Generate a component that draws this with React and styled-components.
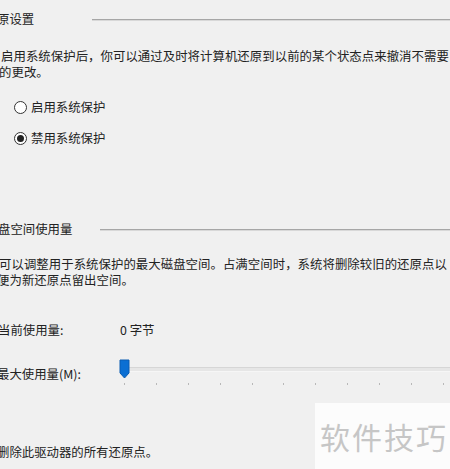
import React from "react";
import styled, { createGlobalStyle } from "styled-components";

const Global = createGlobalStyle`
  html, body { margin: 0; padding: 0; background: #f0f0f0; }
  body { font-family: "Noto Sans CJK SC", "Noto Sans", sans-serif; }
`;

const Page = styled.div`
  position: relative;
  width: 450px;
  height: 469px;
  overflow: hidden;
  background: #f0f0f0;
  color: #222;
  font-size: 12.4px;
  line-height: 16px;
  display: flex;
  flex-direction: column;
`;

const GroupHeader = styled.div`
  display: flex;
  align-items: center;
  gap: ${(p) => p.$gap}px;
  margin-top: ${(p) => p.$top}px;
  margin-left: ${(p) => p.$shift}px;
  height: 16px;
  white-space: nowrap;
`;

const Rule = styled.div`
  flex: 1;
  height: 1px;
  background: #a6a6a6;
  box-shadow: 0 1px 0 #d8d8d8;
`;

const Desc = styled.div`
  margin-top: ${(p) => p.$top}px;
  display: flex;
  flex-direction: column;
  white-space: nowrap;
`;

const Line = styled.span`
  margin-left: ${(p) => p.$shift || 0}px;
  letter-spacing: 0.05px;
`;

const RadioList = styled.div`
  display: flex;
  flex-direction: column;
  gap: 11px;
  margin-top: 17px;
  padding-left: 14px;
`;

const RadioRow = styled.label`
  display: flex;
  align-items: center;
  gap: 4px;
  height: 20px;
`;

const RadioCircle = styled.span`
  width: 11px;
  height: 11px;
  border-radius: 50%;
  border: 1px solid #333;
  background: #fff;
  display: flex;
  align-items: center;
  justify-content: center;
  &::after {
    content: "";
    width: 7px;
    height: 7px;
    border-radius: 50%;
    background: ${(p) => (p.$checked ? "#222" : "transparent")};
  }
`;

const FieldRow = styled.div`
  display: grid;
  grid-template-columns: 119px 1fr;
  align-items: center;
  margin-top: ${(p) => p.$top}px;
  height: ${(p) => p.$h}px;
  white-space: nowrap;
`;

const FieldLabel = styled.span`
  margin-left: ${(p) => p.$shift}px;
`;

const FieldValue = styled.span`
  margin-left: 1px;
`;

const Slider = styled.div`
  position: relative;
  height: 30px;
`;

const Track = styled.div`
  position: absolute;
  left: 8px;
  right: 0;
  top: 8px;
  height: 3px;
  background: #e6e6e6;
  border-top: 1px solid #d6d6d6;
  border-bottom: 1px solid #f6f6f6;
`;

const Thumb = styled.svg`
  position: absolute;
  left: 0;
  top: 0;
`;

const Ticks = styled.div`
  position: absolute;
  left: 5px;
  right: 0;
  top: 24px;
  display: flex;
  gap: 30.9px;
`;

const Tick = styled.span`
  width: 1px;
  height: 2px;
  background: #b8b8b8;
  flex: none;
`;

const Footer = styled.div`
  margin-top: ${(p) => p.$top}px;
  margin-left: -3px;
  white-space: nowrap;
`;

const Watermark = styled.div`
  position: absolute;
  left: 315px;
  top: 403px;
  width: 135px;
  height: 66px;
  background: #fcfcfc;
  display: flex;
  align-items: center;
  padding-left: 5px;
  box-sizing: border-box;
  color: #c6c6c6;
  font-size: 30px;
  letter-spacing: 2px;
  white-space: nowrap;
`;

export default function App() {
  return (
    <Page>
      <Global />
      <GroupHeader $top={11} $shift={-3} $gap={58}>
        <span>原设置</span>
        <Rule />
      </GroupHeader>
      <Desc $top={21}>
        <Line $shift={1}>启用系统保护后，你可以通过及时将计算机还原到以前的某个状态点来撤消不需要</Line>
        <Line $shift={-1}>的更改。</Line>
      </Desc>
      <RadioList>
        <RadioRow>
          <RadioCircle />
          <span>启用系统保护</span>
        </RadioRow>
        <RadioRow>
          <RadioCircle $checked />
          <span>禁用系统保护</span>
        </RadioRow>
      </RadioList>
      <GroupHeader $top={73} $shift={-2} $gap={28}>
        <span>盘空间使用量</span>
        <Rule />
      </GroupHeader>
      <Desc $top={19}>
        <Line $shift={-1}>可以调整用于系统保护的最大磁盘空间。占满空间时，系统将删除较旧的还原点以</Line>
        <Line $shift={-3}>便为新还原点留出空间。</Line>
      </Desc>
      <FieldRow $top={34} $h={16}>
        <FieldLabel $shift={-2}>当前使用量:</FieldLabel>
        <FieldValue>0 字节</FieldValue>
      </FieldRow>
      <FieldRow $top={21} $h={30}>
        <FieldLabel $shift={-3}>最大使用量(M):</FieldLabel>
        <Slider>
          <Track />
          <Ticks>
            {Array.from({ length: 11 }).map((_, i) => (
              <Tick key={i} />
            ))}
          </Ticks>
          <Thumb width="11" height="20" viewBox="0 0 11 20">
            <path d="M1 1 H10 V14 L5.5 19 L1 14 Z" fill="#0b6fd3" stroke="#0a5db2" strokeWidth="1" />
          </Thumb>
        </Slider>
      </FieldRow>
      <Footer $top={55}>删除此驱动器的所有还原点。</Footer>
      <Watermark>软件技巧</Watermark>
    </Page>
  );
}
